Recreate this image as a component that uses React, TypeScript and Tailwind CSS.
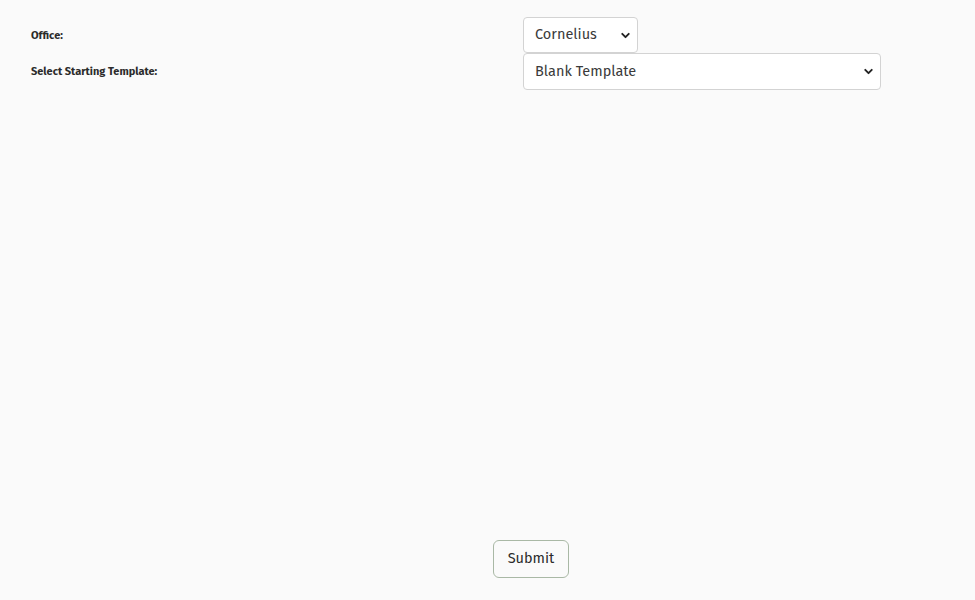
import React, { useState } from 'react';
import { ChevronDown } from 'lucide-react';

const font = { fontFamily: '"Fira Sans", Roboto, "Open Sans", sans-serif' };

const App: React.FC = () => {
  const [office, setOffice] = useState('Cornelius');
  const [template, setTemplate] = useState('Blank Template');

  return (
    <div className="h-[600px] bg-[#fafafa] text-[#333] flex flex-col" style={font}>
      <div className="pt-[17px] pl-[31px] grid grid-cols-[492px_auto] items-center">
        <label className="pt-[2px] text-[11px] font-bold text-[#2b2b2b]">Office:</label>
        <div className="relative w-[115px] h-[36px]">
          <select
            value={office}
            onChange={(e) => setOffice(e.target.value)}
            className="appearance-none w-full h-full bg-white border border-[#d3d3d3] rounded-[4px] pl-[11px] text-[14.5px] text-[#3a3a3a]"
          >
            <option>Cornelius</option>
          </select>
          <ChevronDown className="absolute right-[6px] top-[12px] w-[13px] h-[13px] text-[#222] pointer-events-none" strokeWidth={3.5} />
        </div>
        <label className="pt-[2px] text-[11px] font-bold text-[#2b2b2b]">Select Starting Template:</label>
        <div className="relative w-[358px] h-[37px]">
          <select
            value={template}
            onChange={(e) => setTemplate(e.target.value)}
            className="appearance-none w-full h-full bg-white border border-[#d3d3d3] rounded-[4px] pl-[11px] text-[14.5px] text-[#3a3a3a]"
          >
            <option>Blank Template</option>
          </select>
          <ChevronDown className="absolute right-[6px] top-[12px] w-[13px] h-[13px] text-[#222] pointer-events-none" strokeWidth={3.5} />
        </div>
      </div>
      <div className="flex-1" />
      <div className="pl-[493px] pb-[22px]">
        <button className="w-[76px] h-[38px] bg-[#fafafa] border border-[#a9b8a5] rounded-[6px] text-[14.5px] text-[#2b2b2b]">
          Submit
        </button>
      </div>
    </div>
  );
};

export default App;
